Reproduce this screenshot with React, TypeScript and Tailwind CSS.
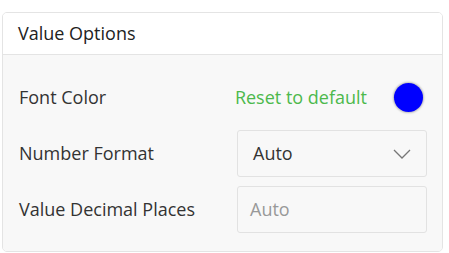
import React from "react";

export default function App() {
  return (
    <div className="w-[449px] h-[253px] bg-white pt-[12px] pl-[2px]" style={{ fontFamily: '"Open Sans", sans-serif' }}>
      <div className="w-[441px] h-[240px] border border-[#e4e4e4] rounded-[5px] overflow-hidden flex flex-col">
        <div className="h-[42px] bg-white border-b border-[#e4e4e4] flex items-center pl-[15px] text-[18px] text-[#222]">
          Value Options
        </div>
        <div className="flex-1 bg-[#f8f8f8] pt-[19px] px-[15px] flex flex-col gap-[9px]">
          <div className="h-[47px] flex items-center justify-between pl-[1px]">
            <span className="text-[18px] text-[#333]">Font Color</span>
            <div className="flex items-center">
              <span className="text-[18px] text-[#4cb94c]">Reset to default</span>
              <div className="ml-[27px] mr-[4px] w-[29px] h-[29px] rounded-full bg-[#0000ff] shadow-[0_0_2px_1px_rgba(0,0,0,0.25)]" />
            </div>
          </div>
          <div className="h-[47px] flex items-center justify-between pl-[1px]">
            <span className="text-[18px] text-[#333]">Number Format</span>
            <div className="w-[190px] h-[47px] border border-[#e2e2e2] rounded-[3px] bg-[#f8f8f8] flex items-center justify-between pl-[15px] pr-[15px]">
              <span className="text-[18px] text-[#333]">Auto</span>
              <svg width="18" height="10" viewBox="0 0 18 10" fill="none">
                <path d="M1 1 L9 9 L17 1" stroke="#777" strokeWidth="1.3" />
              </svg>
            </div>
          </div>
          <div className="h-[47px] flex items-center justify-between pl-[1px]">
            <span className="text-[18px] text-[#333]">Value Decimal Places</span>
            <div className="w-[190px] h-[47px] border border-[#e2e2e2] rounded-[3px] bg-[#f8f8f8] flex items-center pl-[12px]">
              <span className="text-[18px] text-[#999]">Auto</span>
            </div>
          </div>
        </div>
      </div>
    </div>
  );
}
